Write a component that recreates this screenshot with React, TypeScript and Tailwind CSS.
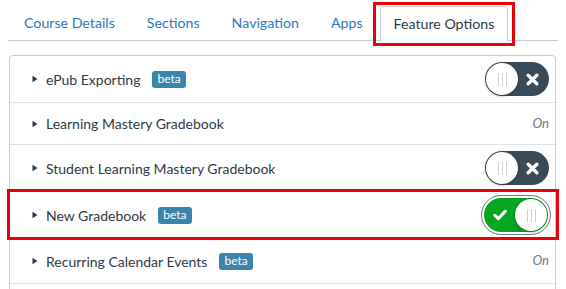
import React from "react";

const Caret = () => (
  <svg width="6" height="8" viewBox="0 0 6 8" className="shrink-0">
    <path d="M0.5 0.8 L5.5 4 L0.5 7.2 Z" fill="#2d3b45" />
  </svg>
);

const Beta = () => (
  <span className="ml-[12px] inline-flex h-[17px] items-center rounded-[3px] bg-[#3b84ab] px-[5px] text-[12px] leading-none text-white">
    beta
  </span>
);

const Grip = () => (
  <div className="flex gap-[3px]">
    <span className="h-[13px] w-px bg-[#c9cfd3]" />
    <span className="h-[13px] w-px bg-[#c9cfd3]" />
    <span className="h-[13px] w-px bg-[#c9cfd3]" />
  </div>
);

const Knob = () => (
  <div className="flex h-[32px] w-[32px] items-center justify-center rounded-full bg-white shadow-[0_1px_3px_rgba(0,0,0,0.35)]">
    <Grip />
  </div>
);

const Toggle = ({ on }: { on?: boolean }) =>
  on ? (
    <div className="flex h-[34px] w-[64px] items-center rounded-full bg-[#04a51f] pl-[9px] pr-px outline outline-1 outline-offset-2 outline-[#6b7780]">
      <svg width="14" height="12" viewBox="0 0 14 12">
        <path d="M1.8 6.3 L5.3 9.6 L12.2 2.4" fill="none" stroke="white" strokeWidth="3" strokeLinecap="round" strokeLinejoin="round" />
      </svg>
      <div className="ml-auto">
        <Knob />
      </div>
    </div>
  ) : (
    <div className="flex h-[34px] w-[64px] items-center rounded-full bg-[#394b58] pl-px pr-[10px]">
      <Knob />
      <svg width="13" height="13" viewBox="0 0 13 13" className="ml-auto">
        <path d="M2.2 2.2 L10.8 10.8 M10.8 2.2 L2.2 10.8" stroke="white" strokeWidth="3.4" strokeLinecap="round" />
      </svg>
    </div>
  );

const On = () => <span className="text-[13px] italic text-[#6f7b84]">On</span>;

const Row = ({
  label,
  beta,
  right,
  h,
  last,
}: {
  label: string;
  beta?: boolean;
  right: React.ReactNode;
  h: string;
  last?: boolean;
}) => (
  <div className={`flex items-center pl-[22px] pr-[6px] ${h} ${last ? "" : "border-b border-[#dde1e4]"}`}>
    <Caret />
    <span className="ml-[8px] text-[14px] text-[#2d3b45]">{label}</span>
    {beta && <Beta />}
    <div className="ml-auto flex items-center">{right}</div>
  </div>
);

export default function App() {
  const tabs = ["Course Details", "Sections", "Navigation", "Apps"];
  return (
    <div
      className="relative h-[289px] w-[566px] overflow-hidden bg-white"
      style={{ fontFamily: "Lato, 'Open Sans', sans-serif" }}
    >
      <div className="mx-[8px] flex h-[41px] items-end border-b border-[#c7cdd1] pt-[6px]">
        {tabs.map((t) => (
          <div key={t} className="flex h-[34px] items-center px-[16px] text-[14.2px] text-[#2b7abc]">
            {t}
          </div>
        ))}
        <div className="-mb-px ml-px flex h-[35px] items-center rounded-t-[4px] border border-b-0 border-[#c7cdd1] bg-white px-[13px] text-[14.2px] text-[#2d3b45]">
          Feature Options
        </div>
      </div>

      <div className="ml-[9px] mr-[10px] mt-[14px] rounded-[4px] border border-[#c7cdd1]">
        <Row label="ePub Exporting" beta right={<Toggle />} h="h-[47px]" />
        <Row label="Learning Mastery Gradebook" right={<On />} h="h-[42px]" />
        <Row label="Student Learning Mastery Gradebook" right={<Toggle />} h="h-[47px]" />
        <Row label="New Gradebook" beta right={<div className="mr-[1px]"><Toggle on /></div>} h="h-[47px]" />
        <Row label="Recurring Calendar Events" beta right={<On />} h="h-[45px]" />
        <div className="h-[40px]" />
      </div>

      <div className="pointer-events-none absolute left-[373px] top-[2px] h-[44px] w-[142px] border-[3px] border-[#e8000b]" />
      <div className="pointer-events-none absolute left-[7px] top-[189px] h-[51px] w-[552px] border-[3px] border-[#e8000b]" />
    </div>
  );
}
